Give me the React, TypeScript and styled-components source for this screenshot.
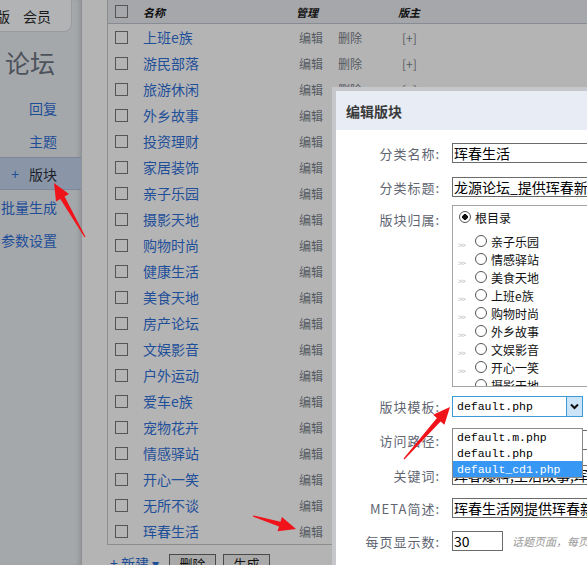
import React from 'react';
import styled, { createGlobalStyle } from 'styled-components';

const GlobalStyle = createGlobalStyle`
  html, body {
    margin: 0;
    padding: 0;
  }
  body {
    width: 587px;
    height: 565px;
    overflow: hidden;
    background: #b3b3b3;
    font-family: "Noto Sans CJK SC", "Liberation Sans", sans-serif;
  }
`;

const Page = styled.div`
  position: relative;
  display: flex;
  width: 587px;
  height: 565px;
  overflow: hidden;
  background: #b4b4b4;
`;

/* ---------- sidebar ---------- */

const Sidebar = styled.aside`
  width: 81px;
  flex-shrink: 0;
  display: flex;
  flex-direction: column;
  background: #a5a8ab;
  border-right: 1px solid #8e9195;
  box-shadow: inset -4px 0 4px -2px rgba(0, 0, 0, 0.12);
`;

const TopTab = styled.div`
  box-sizing: border-box;
  width: 72px;
  height: 32px;
  display: flex;
  align-items: center;
  gap: 13px;
  background: #b2b3b5;
  border-right: 1px solid #9a9b9e;
  border-bottom: 1px solid #9a9b9e;
  border-bottom-right-radius: 8px;
  font-size: 14px;
  color: #1b1b1b;
`;

const TabLabel = styled.span<{ $shift?: number }>`
  margin-left: ${(p) => p.$shift ?? 0}px;
`;

const ForumTitle = styled.div`
  margin-top: 15px;
  padding-left: 5px;
  font-size: 25px;
  line-height: 30px;
  color: #4d525b;
`;

const Menu = styled.nav`
  margin-top: 14px;
  display: flex;
  flex-direction: column;
`;

const MenuItem = styled.div<{ $active?: boolean }>`
  box-sizing: border-box;
  height: 33px;
  display: flex;
  align-items: center;
  justify-content: flex-end;
  padding-right: 24px;
  font-size: 14px;
  color: ${(p) => (p.$active ? '#1c1f2a' : '#1e4e98')};
  background: ${(p) => (p.$active ? '#8a96a8' : 'transparent')};
  border-top: 1px solid ${(p) => (p.$active ? '#7c879a' : 'transparent')};
  border-bottom: 1px solid ${(p) => (p.$active ? '#7c879a' : 'transparent')};
`;

const MenuPlus = styled.span`
  color: #1e4e98;
  margin-right: 10px;
`;

/* ---------- main table ---------- */

const Main = styled.main`
  flex: 1;
  min-width: 0;
  display: flex;
  flex-direction: column;
  padding-left: 25px;
`;

const Table = styled.div`
  width: 540px;
  flex-shrink: 0;
  border-left: 1px solid #8d8d8d;
  border-bottom: 1px solid #8d8d8d;
`;

const HeadRow = styled.div`
  display: grid;
  grid-template-columns: 35px 153px 102px 1fr;
  align-items: center;
  height: 23px;
  background: #a6a7aa;
  border-bottom: 1px solid #878b94;
`;

const HeadCell = styled.span`
  font-size: 11px;
  font-weight: bold;
  font-style: italic;
  color: #111;
`;

const Row = styled.div`
  display: grid;
  grid-template-columns: 35px 153px 102px 1fr;
  align-items: center;
  height: 26px;
`;

const Check = styled.span`
  display: block;
  box-sizing: border-box;
  width: 13px;
  height: 13px;
  margin-left: 7px;
  border: 1px solid #555;
`;

const NameLink = styled.span`
  font-size: 14px;
  color: #1f4f99;
`;

const Actions = styled.span`
  display: flex;
  gap: 15px;
  padding-left: 3px;
  font-size: 12px;
  color: #565b63;
`;

const Moderator = styled.span`
  padding-left: 4px;
  font-size: 12px;
  color: #565b63;
`;

const Footer = styled.div`
  display: flex;
  align-items: center;
  gap: 7px;
  padding: 8px 0 0 3px;
`;

const NewLink = styled.span`
  font-size: 14px;
  color: #1e4e98;
  margin-right: 3px;
`;

const Button = styled.span`
  box-sizing: border-box;
  width: 47px;
  height: 19px;
  display: flex;
  align-items: center;
  justify-content: center;
  background: #a9a9a9;
  border: 1px solid #4a4a4a;
  font-size: 13px;
  color: #111;
`;

/* ---------- modal ---------- */

const Modal = styled.section`
  position: absolute;
  left: 332px;
  top: 87px;
  right: 0;
  bottom: 0;
  background: #fff;
  border-top: 4px solid #c6c7cb;
  border-left: 4px solid #c6c7cb;
  overflow: hidden;
`;

const ModalHeader = styled.header`
  height: 39px;
  display: flex;
  align-items: center;
  padding-left: 10px;
  background: #e8ecf4;
  font-size: 14px;
  font-weight: bold;
  color: #3a3a3a;
`;

const Form = styled.div`
  display: flex;
  flex-direction: column;
  padding-top: 13px;
`;

const FormRow = styled.div<{ $mt?: number; $top?: boolean }>`
  display: grid;
  grid-template-columns: 104px 1fr;
  column-gap: 12px;
  align-items: ${(p) => (p.$top ? 'start' : 'center')};
  margin-top: ${(p) => p.$mt ?? 0}px;
`;

const Label = styled.label<{ $pt?: number }>`
  text-align: right;
  padding-top: ${(p) => p.$pt ?? 0}px;
  font-size: 13px;
  letter-spacing: 1px;
  color: #5f6672;
  white-space: nowrap;
`;

const TextInput = styled.div<{ $w?: number }>`
  box-sizing: border-box;
  width: ${(p) => p.$w ?? 220}px;
  height: 20px;
  display: flex;
  align-items: center;
  padding-left: 1px;
  border: 1px solid #6b6b6b;
  font-size: 14px;
  color: #000;
  white-space: nowrap;
  overflow: hidden;
`;

const InlineField = styled.div`
  display: flex;
  align-items: center;
  gap: 9px;
`;

const Hint = styled.span`
  font-size: 11px;
  font-style: italic;
  color: #9a9a9a;
  white-space: nowrap;
`;

const RadioBox = styled.div`
  box-sizing: border-box;
  width: 220px;
  height: 182px;
  padding-top: 4px;
  border: 1px solid #a5a5a5;
  overflow: hidden;
`;

const RadioRow = styled.div<{ $child?: boolean }>`
  display: flex;
  align-items: center;
  height: 18px;
  padding-left: ${(p) => (p.$child ? 5 : 6)}px;
  font-size: 12px;
  color: #111;
  white-space: nowrap;
`;

const RootRow = styled(RadioRow)`
  height: 14px;
  margin-bottom: 8px;
`;

const Indent = styled.span`
  width: 17px;
  align-self: flex-end;
  font-size: 8px;
  line-height: 10px;
  color: #b5b5b5;
  letter-spacing: -1px;
`;

const Radio = styled.span<{ $checked?: boolean }>`
  box-sizing: border-box;
  width: 12px;
  height: 12px;
  margin-right: 4px;
  border-radius: 50%;
  border: 1px solid #555;
  background: ${(p) =>
    p.$checked ? 'radial-gradient(circle, #111 0 2.6px, #fff 3px)' : '#fff'};
`;

const SelectWrap = styled.div`
  position: relative;
  box-sizing: border-box;
  width: 131px;
  height: 21px;
  display: flex;
  border: 1px solid #3d9ad6;
`;

const SelectValue = styled.span`
  flex: 1;
  display: flex;
  align-items: center;
  padding-left: 4px;
  font-family: "Liberation Mono", "DejaVu Sans Mono", monospace;
  font-size: 11.5px;
  color: #000;
`;

const SelectArrow = styled.span`
  width: 15px;
  display: flex;
  align-items: center;
  justify-content: center;
  background: #cce4f7;
  border-left: 1px solid #3d9ad6;
`;

const DropList = styled.ul`
  position: absolute;
  left: -1px;
  top: 31px;
  box-sizing: border-box;
  width: 131px;
  margin: 0;
  padding: 0;
  list-style: none;
  background: #fff;
  border: 1px solid #8a8a8a;
  z-index: 2;
`;

const DropOption = styled.li<{ $selected?: boolean }>`
  height: 16px;
  display: flex;
  align-items: center;
  padding-left: 4px;
  font-family: "Liberation Mono", "DejaVu Sans Mono", monospace;
  font-size: 11.5px;
  color: ${(p) => (p.$selected ? '#fff' : '#000')};
  background: ${(p) => (p.$selected ? '#3697f5' : 'transparent')};
`;

const Overlay = styled.svg`
  position: absolute;
  left: 0;
  top: 0;
  pointer-events: none;
  z-index: 5;
`;

/* ---------- data ---------- */

const boards = [
  '上班e族', '游民部落', '旅游休闲', '外乡故事', '投资理财', '家居装饰', '亲子乐园',
  '摄影天地', '购物时尚', '健康生活', '美食天地', '房产论坛', '文娱影音', '户外运动',
  '爱车e族', '宠物花卉', '情感驿站', '开心一笑', '无所不谈', '珲春生活',
];

const parents = [
  '亲子乐园', '情感驿站', '美食天地', '上班e族', '购物时尚',
  '外乡故事', '文娱影音', '开心一笑', '摄影天地',
];

const templates = ['default.m.php', 'default.php', 'default_cd1.php'];

// tapered red arrow, from tail to tip
function arrow(x1: number, y1: number, x2: number, y2: number, head = 17, headW = 15, shaftW = 5) {
  const len = Math.hypot(x2 - x1, y2 - y1);
  const dx = (x2 - x1) / len;
  const dy = (y2 - y1) / len;
  const nx = -dy;
  const ny = dx;
  const bx = x2 - dx * head;
  const by = y2 - dy * head;
  const pts = [
    [x1 + nx * 0.6, y1 + ny * 0.6],
    [bx + (nx * shaftW) / 2, by + (ny * shaftW) / 2],
    [bx + (nx * headW) / 2, by + (ny * headW) / 2],
    [x2, y2],
    [bx - (nx * headW) / 2, by - (ny * headW) / 2],
    [bx - (nx * shaftW) / 2, by - (ny * shaftW) / 2],
    [x1 - nx * 0.6, y1 - ny * 0.6],
  ];
  return pts.map((p) => p.map((v) => v.toFixed(1)).join(',')).join(' ');
}

const App: React.FC = () => {
  return (
    <>
      <GlobalStyle />
      <Page>
        <Sidebar>
          <TopTab>
            <TabLabel $shift={-4}>版</TabLabel>
            <TabLabel>会员</TabLabel>
          </TopTab>
          <ForumTitle>论坛</ForumTitle>
          <Menu>
            <MenuItem>回复</MenuItem>
            <MenuItem>主题</MenuItem>
            <MenuItem $active>
              <MenuPlus>+</MenuPlus>版块
            </MenuItem>
            <MenuItem>批量生成</MenuItem>
            <MenuItem>参数设置</MenuItem>
          </Menu>
        </Sidebar>

        <Main>
          <Table>
            <HeadRow>
              <Check />
              <HeadCell>名称</HeadCell>
              <HeadCell>管理</HeadCell>
              <HeadCell>版主</HeadCell>
            </HeadRow>
            {boards.map((name) => (
              <Row key={name}>
                <Check />
                <NameLink>{name}</NameLink>
                <Actions>
                  <span>编辑</span>
                  <span>删除</span>
                </Actions>
                <Moderator>[+]</Moderator>
              </Row>
            ))}
          </Table>
          <Footer>
            <NewLink>+ 新建 ▾</NewLink>
            <Button>删除</Button>
            <Button>生成</Button>
          </Footer>
        </Main>

        <Modal>
          <ModalHeader>编辑版块</ModalHeader>
          <Form>
            <FormRow>
              <Label>分类名称:</Label>
              <TextInput>珲春生活</TextInput>
            </FormRow>
            <FormRow $mt={14}>
              <Label>分类标题:</Label>
              <TextInput>龙源论坛_提供珲春新闻资讯</TextInput>
            </FormRow>
            <FormRow $mt={8} $top>
              <Label $pt={5}>版块归属:</Label>
              <RadioBox>
                <RootRow>
                  <Radio $checked />
                  根目录
                </RootRow>
                {parents.map((p) => (
                  <RadioRow key={p} $child>
                    <Indent>&gt;&gt;</Indent>
                    <Radio />
                    {p}
                  </RadioRow>
                ))}
              </RadioBox>
            </FormRow>
            <FormRow $mt={9}>
              <Label>版块模板:</Label>
              <div>
                <SelectWrap>
                  <SelectValue>default.php</SelectValue>
                  <SelectArrow>
                    <svg width="9" height="7" viewBox="0 0 9 7">
                      <polyline points="1,1.5 4.5,5 8,1.5" fill="none" stroke="#111" strokeWidth="2" />
                    </svg>
                  </SelectArrow>
                  <DropList>
                    {templates.map((t) => (
                      <DropOption key={t} $selected={t === 'default_cd1.php'}>
                        {t}
                      </DropOption>
                    ))}
                  </DropList>
                </SelectWrap>
              </div>
            </FormRow>
            <FormRow $mt={13}>
              <Label>访问路径:</Label>
              <TextInput>hcsh</TextInput>
            </FormRow>
            <FormRow $mt={15}>
              <Label>关键词:</Label>
              <TextInput>珲春爆料,生活故事,珲春新闻</TextInput>
            </FormRow>
            <FormRow $mt={13}>
              <Label>META简述:</Label>
              <TextInput>珲春生活网提供珲春新闻</TextInput>
            </FormRow>
            <FormRow $mt={13}>
              <Label>每页显示数:</Label>
              <InlineField>
                <TextInput $w={51}>30</TextInput>
                <Hint>话题页面，每页显示的帖子数</Hint>
              </InlineField>
            </FormRow>
          </Form>
        </Modal>

        <Overlay width="587" height="565" viewBox="0 0 587 565">
          <polygon points={arrow(85, 237, 54, 183)} fill="#f0141a" />
          <polygon points={arrow(404, 459, 450, 407)} fill="#f0141a" />
          <polygon points={arrow(253, 516, 296, 529)} fill="#f0141a" />
        </Overlay>
      </Page>
    </>
  );
};

export default App;
